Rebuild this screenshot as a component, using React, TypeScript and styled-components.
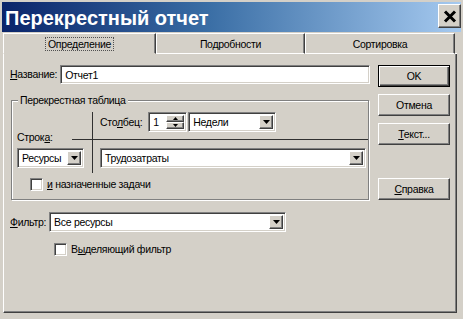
import React from 'react';
import styled, { createGlobalStyle, css } from 'styled-components';

const FACE = '#d4d0c8';

const GlobalStyle = createGlobalStyle`
  html, body { margin: 0; padding: 0; background: ${FACE}; }
  body { font-family: "Liberation Sans", Arial, sans-serif; font-size: 10.5px; letter-spacing: -0.3px; color: #000; }
  * { box-sizing: border-box; }
`;

const raised = css`
  background: ${FACE};
  border: 1px solid;
  border-color: #fff #404040 #404040 #fff;
  box-shadow: inset -1px -1px 0 #808080;
`;

const sunken = css`
  background: #fff;
  border: 1px solid;
  border-color: #808080 #fff #fff #808080;
  box-shadow: inset 1px 1px 0 #404040, inset -1px -1px 0 ${FACE};
`;

const Window = styled.div`
  width: 463px;
  height: 319px;
  background: ${FACE};
  padding: 2px;
  display: flex;
  flex-direction: column;
  overflow: hidden;
`;

const TitleBar = styled.div`
  flex: none;
  height: 30px;
  display: flex;
  align-items: flex-start;
  justify-content: space-between;
  padding-left: 3px;
  background: linear-gradient(to right, #0a246a 0%, #3a6ea5 45%, #a6caf0 100%);
`;

const Title = styled.span`
  color: #fff;
  font-weight: bold;
  font-size: 20px;
  letter-spacing: 0;
  line-height: 30px;
  padding-top: 1px;
  white-space: nowrap;
`;

const CloseButton = styled.div`
  ${raised};
  width: 23px;
  height: 24px;
  margin-top: 2px;
  display: flex;
  align-items: center;
  justify-content: center;
`;

const Content = styled.div`
  flex: 1;
  display: flex;
  flex-direction: column;
  padding: 1px 4px 4px 1px;
`;

const TabStrip = styled.div`
  flex: none;
  height: 21px;
  display: flex;
`;

const Tab = styled.div<{ $w: number; $active?: boolean }>`
  width: ${(p) => p.$w}px;
  flex: none;
  display: flex;
  align-items: center;
  justify-content: center;
  border-top: 1px solid #fff;
  border-left: 1px solid #fff;
  border-right: 1px solid #404040;
  border-bottom: 1px solid ${(p) => (p.$active ? FACE : '#fff')};
  box-shadow: inset -1px 0 0 #808080;
`;

const TabFill = styled.div`
  flex: 1;
  border-bottom: 1px solid #fff;
`;

const FocusText = styled.span`
  border: 1px dotted #505050;
  padding: 0 2px;
  line-height: 12px;
`;

const Panel = styled.div`
  flex: 1;
  display: flex;
  gap: 8px;
  align-items: flex-start;
  padding: 11px 0 0 6px;
  border-left: 1px solid #fff;
  border-right: 1px solid #404040;
  border-bottom: 1px solid #404040;
  box-shadow: inset -1px -1px 0 #808080;
`;

const LeftCol = styled.div`
  width: 360px;
  display: flex;
  flex-direction: column;
`;

const RightCol = styled.div`
  width: 72px;
  display: flex;
  flex-direction: column;
`;

const FieldRow = styled.div<{ $mt?: number }>`
  display: flex;
  align-items: center;
  gap: 3px;
  margin-top: ${(p) => p.$mt ?? 0}px;
`;

const Label = styled.span`
  white-space: nowrap;
  line-height: 13px;
`;

const Accel = styled.span`
  text-decoration: underline;
`;

const TextBox = styled.div<{ $w?: number }>`
  ${sunken};
  height: 19px;
  flex: ${(p) => (p.$w ? 'none' : '1')};
  width: ${(p) => (p.$w ? `${p.$w}px` : 'auto')};
  display: flex;
  align-items: center;
  padding: 0 4px;
  white-space: nowrap;
`;

const ComboBox = styled.div<{ $w?: number }>`
  ${sunken};
  height: 20px;
  flex: ${(p) => (p.$w ? 'none' : '1')};
  width: ${(p) => (p.$w ? `${p.$w}px` : 'auto')};
  display: flex;
  align-items: stretch;
  padding: 2px;
`;

const ComboText = styled.span`
  flex: 1;
  display: flex;
  align-items: center;
  padding-left: 2px;
  white-space: nowrap;
  overflow: hidden;
`;

const DropButton = styled.span`
  ${raised};
  width: 14px;
  flex: none;
  display: flex;
  align-items: center;
  justify-content: center;
`;

const SpinBox = styled.div`
  ${sunken};
  height: 20px;
  width: 39px;
  flex: none;
  display: flex;
  padding: 2px;
`;

const SpinText = styled.span`
  flex: 1;
  display: flex;
  align-items: center;
  padding-left: 2px;
`;

const SpinButtons = styled.span`
  width: 18px;
  display: flex;
  flex-direction: column;
`;

const SpinButton = styled.span`
  ${raised};
  flex: 1;
  display: flex;
  align-items: center;
  justify-content: center;
`;

const GroupBox = styled.div`
  position: relative;
  margin: 16px 0 0 1px;
  width: 358px;
  border: 1px solid #808080;
  box-shadow: inset 1px 1px 0 #fff, 1px 1px 0 #fff;
  padding: 11px 0 8px 5px;
`;

const GroupTitle = styled.span`
  position: absolute;
  top: -7px;
  left: 6px;
  padding: 0 2px;
  background: ${FACE};
  line-height: 13px;
  white-space: nowrap;
`;

const CrossGrid = styled.div`
  display: grid;
  grid-template-columns: 75px 1fr;
  grid-template-rows: 28px 33px;
`;

const CornerCell = styled.div`
  display: flex;
  align-items: flex-end;
  justify-content: space-between;
`;

const CornerLabel = styled(Label)`
  margin-bottom: -4px;
`;

const CornerRule = styled.span`
  width: 20px;
  border-bottom: 1px solid #303030;
`;

const HeaderCell = styled.div`
  border-left: 1px solid #303030;
  border-bottom: 1px solid #303030;
  padding-left: 7px;
  display: flex;
  align-items: flex-start;
`;

const Line = styled.div`
  display: flex;
  align-items: center;
  height: 20px;
  gap: 1px;
`;

const LineLabel = styled(Label)`
  margin-right: 5px;
`;

const RowCell = styled.div`
  padding-top: 8px;
`;

const BodyCell = styled.div`
  border-left: 1px solid #303030;
  padding: 8px 2px 0 7px;
  display: flex;
`;

const CheckRow = styled.div<{ $mt: number; $pl: number }>`
  display: flex;
  align-items: center;
  gap: 4px;
  margin-top: ${(p) => p.$mt}px;
  padding-left: ${(p) => p.$pl}px;
  height: 13px;
`;

const CheckBox = styled.span`
  ${sunken};
  width: 13px;
  height: 13px;
  flex: none;
`;

const Button = styled.div<{ $default?: boolean; $mt?: number }>`
  ${raised};
  height: 22px;
  margin-top: ${(p) => p.$mt ?? 0}px;
  display: flex;
  align-items: center;
  justify-content: center;
  ${(p) =>
    p.$default &&
    css`
      border-color: #000;
      box-shadow: inset 1px 1px 0 #fff, inset -1px -1px 0 #404040, inset -2px -2px 0 #808080;
    `}
`;

const DownArrow = () => (
  <svg width="7" height="4" viewBox="0 0 7 4">
    <polygon points="0,0 7,0 3.5,4" fill="#000" />
  </svg>
);

const TinyArrow = ({ up }: { up?: boolean }) => (
  <svg width="5" height="3" viewBox="0 0 5 3">
    <polygon points={up ? '2.5,0 5,3 0,3' : '0,0 5,0 2.5,3'} fill="#000" />
  </svg>
);

const Combo = ({ text, w }: { text: string; w?: number }) => (
  <ComboBox $w={w}>
    <ComboText>{text}</ComboText>
    <DropButton>
      <DownArrow />
    </DropButton>
  </ComboBox>
);

export default function App() {
  return (
    <>
      <GlobalStyle />
      <Window>
        <TitleBar>
          <Title>Перекрестный отчет</Title>
          <CloseButton>
            <svg width="14" height="13" viewBox="0 0 14 13">
              <path d="M2 1.5 L12 11.5 M12 1.5 L2 11.5" stroke="#000" strokeWidth="3" />
            </svg>
          </CloseButton>
        </TitleBar>
        <Content>
          <TabStrip>
            <Tab $w={153} $active>
              <FocusText>Определение</FocusText>
            </Tab>
            <Tab $w={149}>Подробности</Tab>
            <Tab $w={150}>Сортировка</Tab>
            <TabFill />
          </TabStrip>
          <Panel>
            <LeftCol>
              <FieldRow>
                <Label>
                  <Accel>Н</Accel>азвание:
                </Label>
                <TextBox>Отчет1</TextBox>
              </FieldRow>

              <GroupBox>
                <GroupTitle>Перекрестная таблица</GroupTitle>
                <CrossGrid>
                  <CornerCell>
                    <CornerLabel>
                      Строк<Accel>а</Accel>:
                    </CornerLabel>
                    <CornerRule />
                  </CornerCell>
                  <HeaderCell>
                    <Line>
                      <LineLabel>
                        Сто<Accel>л</Accel>бец:
                      </LineLabel>
                      <SpinBox>
                        <SpinText>1</SpinText>
                        <SpinButtons>
                          <SpinButton>
                            <TinyArrow up />
                          </SpinButton>
                          <SpinButton>
                            <TinyArrow />
                          </SpinButton>
                        </SpinButtons>
                      </SpinBox>
                      <Combo text="Недели" w={88} />
                    </Line>
                  </HeaderCell>
                  <RowCell>
                    <Combo text="Ресурсы" w={67} />
                  </RowCell>
                  <BodyCell>
                    <Combo text="Трудозатраты" />
                  </BodyCell>
                </CrossGrid>
                <CheckRow $mt={5} $pl={13}>
                  <CheckBox />
                  <Label>
                    <Accel>и</Accel> назначенные задачи
                  </Label>
                </CheckRow>
              </GroupBox>

              <FieldRow $mt={12}>
                <Label>
                  <Accel>Ф</Accel>ильтр:
                </Label>
                <Combo text="Все ресурсы" w={237} />
              </FieldRow>

              <CheckRow $mt={11} $pl={44}>
                <CheckBox />
                <Label>
                  В<Accel>ы</Accel>деляющий фильтр
                </Label>
              </CheckRow>
            </LeftCol>

            <RightCol>
              <Button $default>OK</Button>
              <Button $mt={7}>Отмена</Button>
              <Button $mt={7}>
                <span>
                  <Accel>Т</Accel>екст...
                </span>
              </Button>
              <Button $mt={33}>
                <span>
                  <Accel>С</Accel>правка
                </span>
              </Button>
            </RightCol>
          </Panel>
        </Content>
      </Window>
    </>
  );
}
